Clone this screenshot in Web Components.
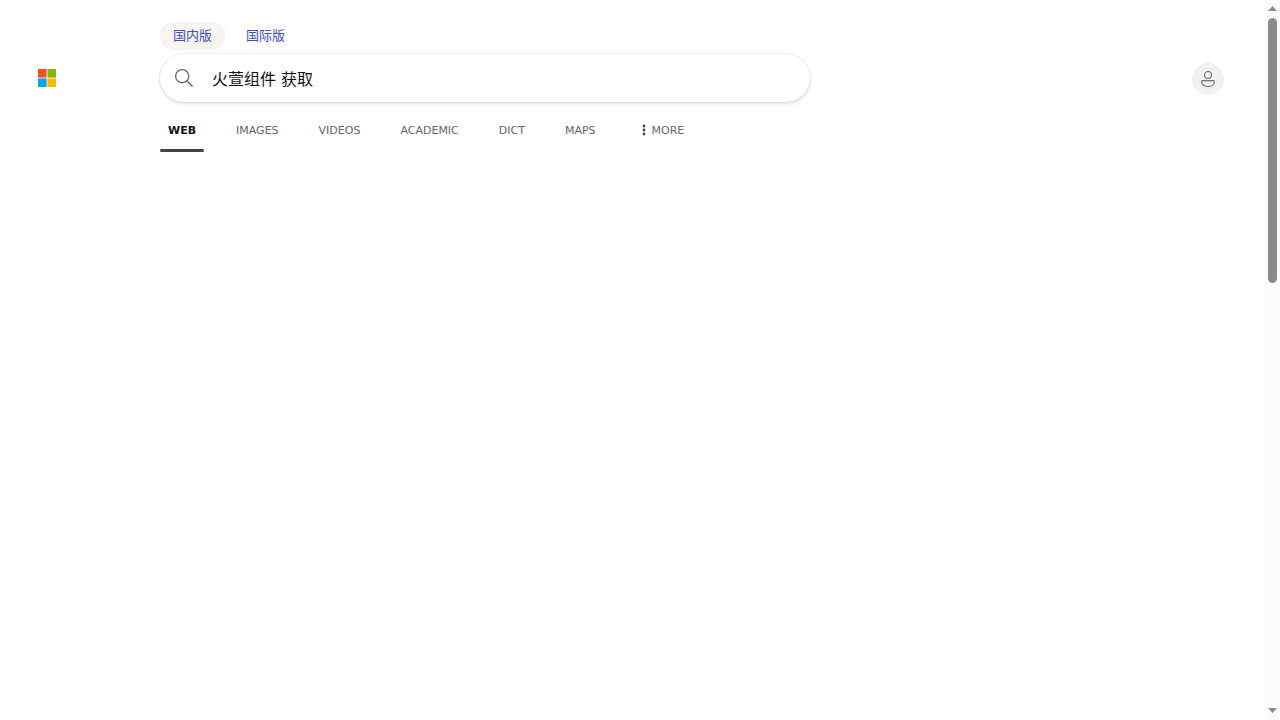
<!DOCTYPE html>
<html lang="zh">
<head>
<meta charset="utf-8">
<title>火萱组件 获取</title>
<style>
html,body{margin:0;height:100%;background:#fff;overflow:hidden}
body{font-family:"DejaVu Sans","Noto Sans CJK SC",sans-serif}
</style>
</head>
<body>
<search-page></search-page>
<script>
function define(name, html) {
  const t = document.createElement('template');
  t.innerHTML = html;
  customElements.define(name, class extends HTMLElement {
    constructor() {
      super();
      this.attachShadow({mode: 'open'}).append(t.content.cloneNode(true));
    }
  });
}

define('brand-logo', `<style>
:host{display:block;width:18px;height:18px}svg{display:block}
</style><svg width="18" height="18" viewBox="0 0 18 18"><path fill="#f25022" d="M0 0h8.6v8.6H0z"/><path fill="#7fba00" d="M9.4 0H18v8.6H9.4z"/><path fill="#00a4ef" d="M0 9.4h8.6V18H0z"/><path fill="#ffb900" d="M9.4 9.4H18V18H9.4z"/></svg>`);

define('region-chip', `<style>
:host{display:block;box-sizing:border-box;height:28px;padding:0 14px 0 13px;border-radius:14px;font:13px/26px "Noto Sans CJK SC",sans-serif;color:#4050b5;white-space:nowrap}
:host([selected]){background:#f8f4f2}
</style><slot></slot>`);

define('search-box', `<style>
:host{display:flex;align-items:center;box-sizing:border-box;width:650px;height:48px;padding-left:14px;border-radius:24px;background:#fff;box-shadow:0 0 0 1px rgba(0,0,0,.06),0 2px 4px 0 rgba(0,0,0,.11)}
svg{display:block;flex:none;margin-right:18px}
span{font:16px/24px "DejaVu Sans","Noto Sans CJK SC",sans-serif;color:#111;white-space:pre;padding-top:4px}
</style><svg width="20" height="20" viewBox="0 0 20 20" fill="none" stroke="#6c6c6c" stroke-width="1.4" stroke-linecap="round"><circle cx="8.2" cy="8.2" r="6.6"/><path d="M13 13L18.2 18.2"/></svg><span><slot></slot></span>`);

define('scope-tab', `<style>
:host{display:flex;align-items:center;box-sizing:border-box;height:44px;padding:0 8px;font-size:11px;line-height:16px;color:#666;white-space:nowrap;flex-direction:column}
span{display:block;margin-top:15px}
i{display:block;align-self:stretch;height:3px;margin:10px -8px 0;border-radius:2px}
:host([selected]){color:#111;font-weight:bold}
:host([selected]) i{background:#444}
</style><span><slot></slot></span><i></i>`);

define('more-dots', `<style>
:host{display:inline-block;width:4px;height:12px;margin-right:6px;vertical-align:-2px}svg{display:block}
</style><svg width="4" height="12" viewBox="0 0 4 12" fill="#444"><circle cx="2" cy="2" r="1.4"/><circle cx="2" cy="6" r="1.4"/><circle cx="2" cy="10" r="1.4"/></svg>`);

define('user-avatar', `<style>
:host{display:grid;place-items:center;width:32px;height:32px;border-radius:50%;background:#f1f1f1}svg{display:block}
</style><svg width="16" height="18" viewBox="0 0 16 18" fill="none" stroke="#6c6c6c" stroke-width="1.1"><circle cx="8" cy="5" r="3.5"/><path d="M2.7 10.6h10.6c.6 0 1.1.5 1.1 1.1 0 3-2.9 4.8-6.4 4.8s-6.4-1.8-6.4-4.8c0-.6.5-1.1 1.1-1.1z"/></svg>`);

define('scroll-rail', `<style>
:host{display:flex;flex-direction:column;align-items:center;box-sizing:border-box;width:15px;height:100%;background:#fcfcfc;padding:6px 0 7px}
svg{display:block;flex:none}
i{display:block;width:9px;height:265px;margin-top:7px;border-radius:4.5px;background:#8b8b8b}
.down{margin-top:auto}
</style><svg width="9" height="5"><path fill="#8b8b8b" d="M0 5L4.5 0L9 5z"/></svg><i></i><svg class="down" width="9" height="5"><path fill="#8b8b8b" d="M0 0h9L4.5 5z"/></svg>`);

define('search-page', `<style>
:host{display:grid;grid-template-columns:1fr 15px;width:100%;height:100vh}
header{display:grid;grid-template-columns:122px 1fr 32px;grid-template-rows:28px 48px 50px;row-gap:4px;padding:22px 41px 0 38px;align-content:start}
.regions{grid-column:2;display:flex;gap:7px}
brand-logo{grid-column:1;grid-row:2;margin-top:15px}
search-box{grid-column:2;grid-row:2}
user-avatar{grid-column:3;grid-row:2;margin-top:9px}
nav{grid-column:2;grid-row:3;display:flex;gap:24px;padding-top:2px}
.more{margin-left:6px}
</style>
<header>
<div class="regions"><region-chip selected>国内版</region-chip><region-chip>国际版</region-chip></div>
<brand-logo></brand-logo><search-box>火萱组件 获取</search-box><user-avatar></user-avatar>
<nav><scope-tab selected>WEB</scope-tab><scope-tab>IMAGES</scope-tab><scope-tab>VIDEOS</scope-tab><scope-tab>ACADEMIC</scope-tab><scope-tab>DICT</scope-tab><scope-tab>MAPS</scope-tab><scope-tab class="more"><more-dots></more-dots>MORE</scope-tab></nav>
</header>
<scroll-rail></scroll-rail>`);
</script>
</body>
</html>
